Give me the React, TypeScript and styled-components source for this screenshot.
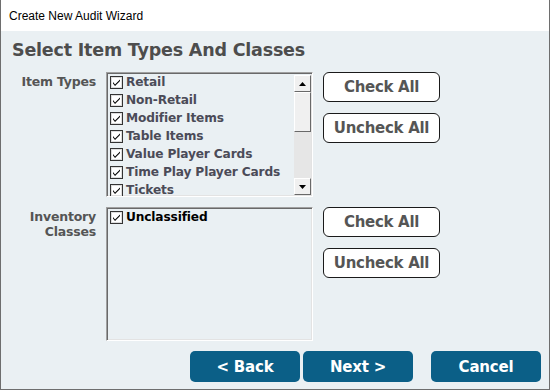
import styled, { createGlobalStyle } from "styled-components";

const GlobalStyle = createGlobalStyle`
  html, body {
    margin: 0;
    padding: 0;
    background: #ffffff;
  }
`;

const Window = styled.div`
  width: 550px;
  height: 390px;
  box-sizing: border-box;
  border: 1px solid #6e6e6e;
  border-top: none;
  display: flex;
  flex-direction: column;
  background: #eaf0f3;
  font-family: "DejaVu Sans", Tahoma, sans-serif;
`;

const TitleBar = styled.div`
  height: 31px;
  flex: none;
  background: #ffffff;
  display: flex;
  align-items: center;
  padding-left: 8px;
  font-family: "Liberation Sans", Arial, sans-serif;
  font-size: 12px;
  color: #000;
`;

const Body = styled.div`
  flex: 1;
  display: flex;
  flex-direction: column;
  padding: 8px 0 0 11px;
`;

const Heading = styled.h1`
  margin: 0 0 11px 0;
  font-size: 17.5px;
  line-height: 22px;
  font-weight: bold;
  color: #4d4d4d;
  letter-spacing: -0.2px;
`;

const Section = styled.div<{ $gap: number }>`
  display: grid;
  grid-template-columns: 84px 207px 117px;
  column-gap: 10px;
  margin-bottom: ${(p) => p.$gap}px;
`;

const Label = styled.div`
  text-align: right;
  font-size: 12.5px;
  font-weight: bold;
  line-height: 15px;
  letter-spacing: -0.2px;
  color: #555555;
  padding-top: 2px;
`;

const ListBox = styled.div<{ $h: number }>`
  height: ${(p) => p.$h}px;
  box-sizing: border-box;
  border: 1px solid;
  border-color: #a0a0a0 #ffffff #ffffff #a0a0a0;
  box-shadow: inset 1px 1px 0 #696969, inset -1px -1px 0 #e3e3e3;
  display: flex;
  overflow: hidden;
`;

const Items = styled.div`
  flex: 1;
  padding: 0 0 0 3px;
`;

const Item = styled.div<{ $dark?: boolean }>`
  height: 18px;
  display: flex;
  align-items: center;
  gap: 3px;
  font-size: 12.2px;
  font-weight: bold;
  letter-spacing: -0.15px;
  color: ${(p) => (p.$dark ? "#000000" : "#4b4b58")};
  white-space: nowrap;
`;

const ScrollBar = styled.div`
  width: 17px;
  margin: 2px 1px 1px 0;
  display: flex;
  flex-direction: column;
  background: #e6e6e6;
`;

const ScrollBtn = styled.div`
  height: 17px;
  box-sizing: border-box;
  border: 1px solid;
  border-color: #ffffff #696969 #696969 #ffffff;
  background: #f0f0f0;
  display: flex;
  align-items: center;
  justify-content: center;
`;

const Thumb = styled.div`
  height: 40px;
  box-sizing: border-box;
  border: 1px solid;
  border-color: #ffffff #696969 #696969 #ffffff;
  background: #f0f0f0;
`;

const Track = styled.div`
  flex: 1;
`;

const SideButtons = styled.div`
  display: flex;
  flex-direction: column;
  gap: 11px;
`;

const SideButton = styled.button`
  height: 30px;
  box-sizing: border-box;
  border: 1px solid #1a1a1a;
  border-radius: 6px;
  background: #ffffff;
  font-family: "DejaVu Sans", Tahoma, sans-serif;
  font-size: 15px;
  font-weight: bold;
  letter-spacing: -0.3px;
  color: #555555;
  padding: 0;
`;

const Footer = styled.div`
  display: flex;
  padding-left: 178px;
`;

const NavButton = styled.button<{ $ml?: number }>`
  width: 110px;
  height: 31px;
  margin-left: ${(p) => p.$ml ?? 0}px;
  border: none;
  border-radius: 5px;
  background: #0b5f87;
  color: #ffffff;
  font-family: "DejaVu Sans", Tahoma, sans-serif;
  font-size: 15px;
  font-weight: bold;
  letter-spacing: -0.2px;
  padding: 0;
`;

function CheckBox() {
  return (
    <svg width="13" height="13" viewBox="0 0 13 13">
      <rect x="0.5" y="0.5" width="12" height="12" fill="#fff" stroke="#333" />
      <rect x="1.5" y="1.5" width="10" height="10" fill="none" stroke="#ddd" />
      <path d="M3 6 L5 8.5 L10 3.5 L10 5 L5 10 L3 7.5 Z" fill="#000" />
    </svg>
  );
}

function Arrow({ up }: { up?: boolean }) {
  return (
    <svg width="7" height="4" viewBox="0 0 7 4">
      <path d={up ? "M0 4 L3.5 0 L7 4 Z" : "M0 0 L3.5 4 L7 0 Z"} fill="#000" />
    </svg>
  );
}

const itemTypes = [
  "Retail",
  "Non-Retail",
  "Modifier Items",
  "Table Items",
  "Value Player Cards",
  "Time Play Player Cards",
  "Tickets",
];

export default function App() {
  return (
    <>
      <GlobalStyle />
      <Window>
        <TitleBar>Create New Audit Wizard</TitleBar>
        <Body>
          <Heading>Select Item Types And Classes</Heading>

          <Section $gap={10}>
            <Label>Item Types</Label>
            <ListBox $h={125}>
              <Items>
                {itemTypes.map((t) => (
                  <Item key={t}>
                    <CheckBox />
                    {t}
                  </Item>
                ))}
              </Items>
              <ScrollBar>
                <ScrollBtn>
                  <Arrow up />
                </ScrollBtn>
                <Thumb />
                <Track />
                <ScrollBtn>
                  <Arrow />
                </ScrollBtn>
              </ScrollBar>
            </ListBox>
            <SideButtons>
              <SideButton>Check All</SideButton>
              <SideButton>Uncheck All</SideButton>
            </SideButtons>
          </Section>

          <Section $gap={10}>
            <Label>
              Inventory
              <br />
              Classes
            </Label>
            <ListBox $h={134}>
              <Items>
                <Item $dark>
                  <CheckBox />
                  Unclassified
                </Item>
              </Items>
            </ListBox>
            <SideButtons>
              <SideButton>Check All</SideButton>
              <SideButton>Uncheck All</SideButton>
            </SideButtons>
          </Section>

          <Footer>
            <NavButton>&lt; Back</NavButton>
            <NavButton $ml={3}>Next &gt;</NavButton>
            <NavButton $ml={18}>Cancel</NavButton>
          </Footer>
        </Body>
      </Window>
    </>
  );
}
